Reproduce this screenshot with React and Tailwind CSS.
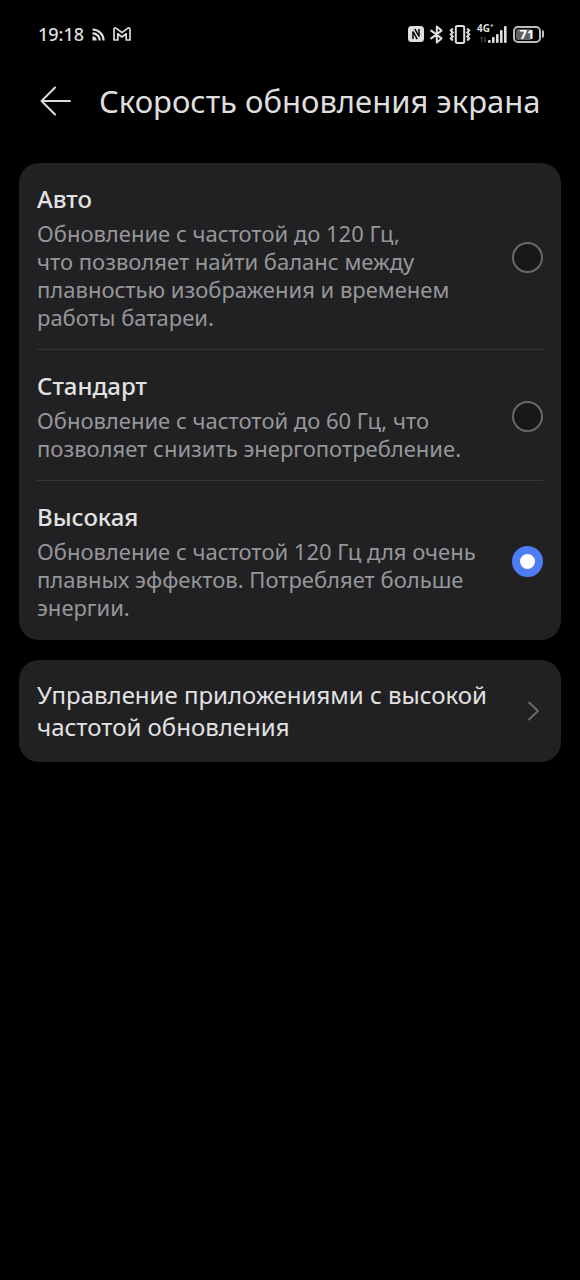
import React, { useState } from "react";

const MODES = [
  {
    id: "auto",
    title: "Авто",
    text: "Обновление с частотой до 120 Гц, что\u00a0позволяет найти баланс между плавностью изображения и временем работы батареи.",
  },
  {
    id: "standard",
    title: "Стандарт",
    text: "Обновление с частотой до 60 Гц, что позволяет снизить энергопотребление.",
  },
  {
    id: "high",
    title: "Высокая",
    text: "Обновление с частотой 120 Гц для очень плавных эффектов. Потребляет больше энергии.",
  },
];

function CastIcon() {
  return (
    <svg width="13" height="13" viewBox="0 0 13 13" fill="none" stroke="currentColor" strokeWidth="2.2">
      <path d="M0.5 1.5A11 11 0 0 1 11.6 12.5" />
      <path d="M0.5 5.3A7.2 7.2 0 0 1 7.8 12.5" />
      <path d="M0.5 8.3A4.2 4.2 0 0 1 4.7 12.5H0.5Z" fill="currentColor" stroke="none" />
    </svg>
  );
}

function MailIcon() {
  return (
    <svg width="18" height="14" viewBox="0 0 18 14" fill="none" stroke="currentColor" strokeWidth="1.7" strokeLinejoin="round">
      <path d="M1 2.2V13H4.8V6.8L9 10L13.2 6.8V13H17V2.2C17 1 15.6 0.6 14.6 1.4L9 5.6L3.4 1.4C2.4 0.6 1 1 1 2.2Z" />
    </svg>
  );
}

function NfcIcon() {
  return (
    <svg width="16" height="16" viewBox="0 0 16 16" fill="none">
      <rect width="16" height="16" rx="3.5" fill="currentColor" />
      <path d="M5 13V5.5L9.2 13.2M11 3V10.5L6.8 2.8" stroke="#000" strokeWidth="1.5" />
    </svg>
  );
}

function BluetoothIcon() {
  return (
    <svg width="13" height="19" viewBox="0 0 13 19" fill="none" stroke="currentColor" strokeWidth="2" strokeLinejoin="round" strokeLinecap="round">
      <path d="M1.2 5.6L11.5 13.4L6.8 17.6V1.4L11.5 5.6L1.2 13.4" />
    </svg>
  );
}

function VibrateIcon() {
  return (
    <svg width="22" height="19" viewBox="0 0 22 19" fill="none" stroke="currentColor" strokeWidth="2">
      <rect x="6.8" y="1" width="8.4" height="17" rx="1.5" />
      <path d="M3.8 3.5L1.8 5.5L3.8 7.5L1.8 9.5L3.8 11.5L1.8 13.5L3.8 15.5" />
      <path d="M18.2 3.5L20.2 5.5L18.2 7.5L20.2 9.5L18.2 11.5L20.2 13.5L18.2 15.5" />
    </svg>
  );
}

function SignalIcon() {
  return (
    <svg width="30" height="17" viewBox="0 0 30 17" fill="currentColor">
      <path d="M4.5 16V11M3 12.5L4.5 11L6 12.5M8 11V16M6.5 14.5L8 16L9.5 14.5" fill="none" stroke="#4a4a4a" strokeWidth="1" />
      <rect x="11" y="14" width="2.6" height="3" rx="1" />
      <rect x="15" y="11" width="2.6" height="6" rx="1" />
      <rect x="19" y="8" width="2.6" height="9" rx="1" />
      <rect x="23" y="4" width="2.6" height="13" rx="1" />
      <rect x="27" y="0" width="2.6" height="17" rx="1" />
    </svg>
  );
}

function StatusBar() {
  return (
    <div className="flex items-center justify-between pl-[38px] pr-9 pt-5 h-12 text-[#dedede]">
      <div className="flex items-center gap-2">
        <span className="text-lg leading-7 font-medium">19:18</span>
        <CastIcon />
        <MailIcon />
      </div>
      <div className="flex items-center gap-1.5">
        <NfcIcon />
        <BluetoothIcon />
        <VibrateIcon />
        <div className="relative">
          <SignalIcon />
          <span className="absolute left-0 -top-1 text-[10px] leading-3 font-bold">4G⁺</span>
        </div>
        <div className="flex items-center gap-px">
          <div className="flex items-center w-7 h-[17px] p-px rounded-[5px] border-2 border-[#bdbdbd]">
            <div className="flex items-center justify-center w-full h-full rounded-[2px] bg-linear-to-r from-[#606060] from-70% to-black to-70% text-[13px] leading-3 font-bold text-white">
              71
            </div>
          </div>
          <div className="w-0.5 h-2 rounded-r-sm bg-[#bdbdbd]" />
        </div>
      </div>
    </div>
  );
}

function ModeRow({ mode, checked, onSelect }) {
  return (
    <label className="block px-[18px] group cursor-pointer">
      <div className="flex items-center justify-between gap-8 pt-5 pb-[18px] border-b border-[#363638] group-last:border-transparent">
        <div className="flex-1">
          <div className="text-2xl leading-8 font-medium text-[#e2e2e2]">{mode.title}</div>
          <p className="mt-1 text-[22px] leading-7 text-[#97979a]">{mode.text}</p>
        </div>
        <input
          type="radio"
          name="refresh-rate"
          aria-label={mode.title}
          checked={checked}
          onChange={() => onSelect(mode.id)}
          className="appearance-none shrink-0 size-[31px] rounded-full border-2 border-[#69696b] bg-[#18181a] checked:border-8 checked:border-[#4e7cf5] checked:bg-white"
        />
      </div>
    </label>
  );
}

function App() {
  const [selected, setSelected] = useState("high");

  return (
    <div className="min-h-screen bg-black font-['Noto_Sans',sans-serif]">
      <StatusBar />

      {/* Header */}
      <header className="flex items-center gap-7 pl-10 pr-4 pt-[31px]">
        <button type="button" aria-label="Назад" className="text-[#dedede]">
          <svg width="31" height="30" viewBox="0 0 31 30" fill="none" stroke="currentColor" strokeWidth="2" strokeLinecap="round" strokeLinejoin="round">
            <path d="M15 1.5L1.5 15L15 28.5M1.5 15H30" />
          </svg>
        </button>
        <h1 className="text-[31px] leading-11 whitespace-nowrap text-[#dedede]">
          Скорость обновления экрана
        </h1>
      </header>

      <main className="flex flex-col gap-5 px-[19px] pt-10">
        {/* Refresh rate modes */}
        <div role="radiogroup" aria-label="Скорость обновления экрана" className="rounded-[20px] bg-[#212123]">
          {MODES.map((mode) => (
            <ModeRow key={mode.id} mode={mode} checked={selected === mode.id} onSelect={setSelected} />
          ))}
        </div>

        {/* Per-app settings */}
        <a href="#apps" className="flex items-center justify-between gap-4 px-[18px] py-[19px] rounded-[20px] bg-[#212123]">
          <span className="flex-1 text-2xl leading-8 font-[450] text-[#e2e2e2]">
            Управление приложениями с высокой частотой обновления
          </span>
          <svg width="20" height="20" viewBox="0 0 20 20" fill="none" stroke="#69696b" strokeWidth="2" strokeLinecap="round" strokeLinejoin="round">
            <path d="M6 1.5L15 10L6 18.5" />
          </svg>
        </a>
      </main>
    </div>
  );
}

export default App;
